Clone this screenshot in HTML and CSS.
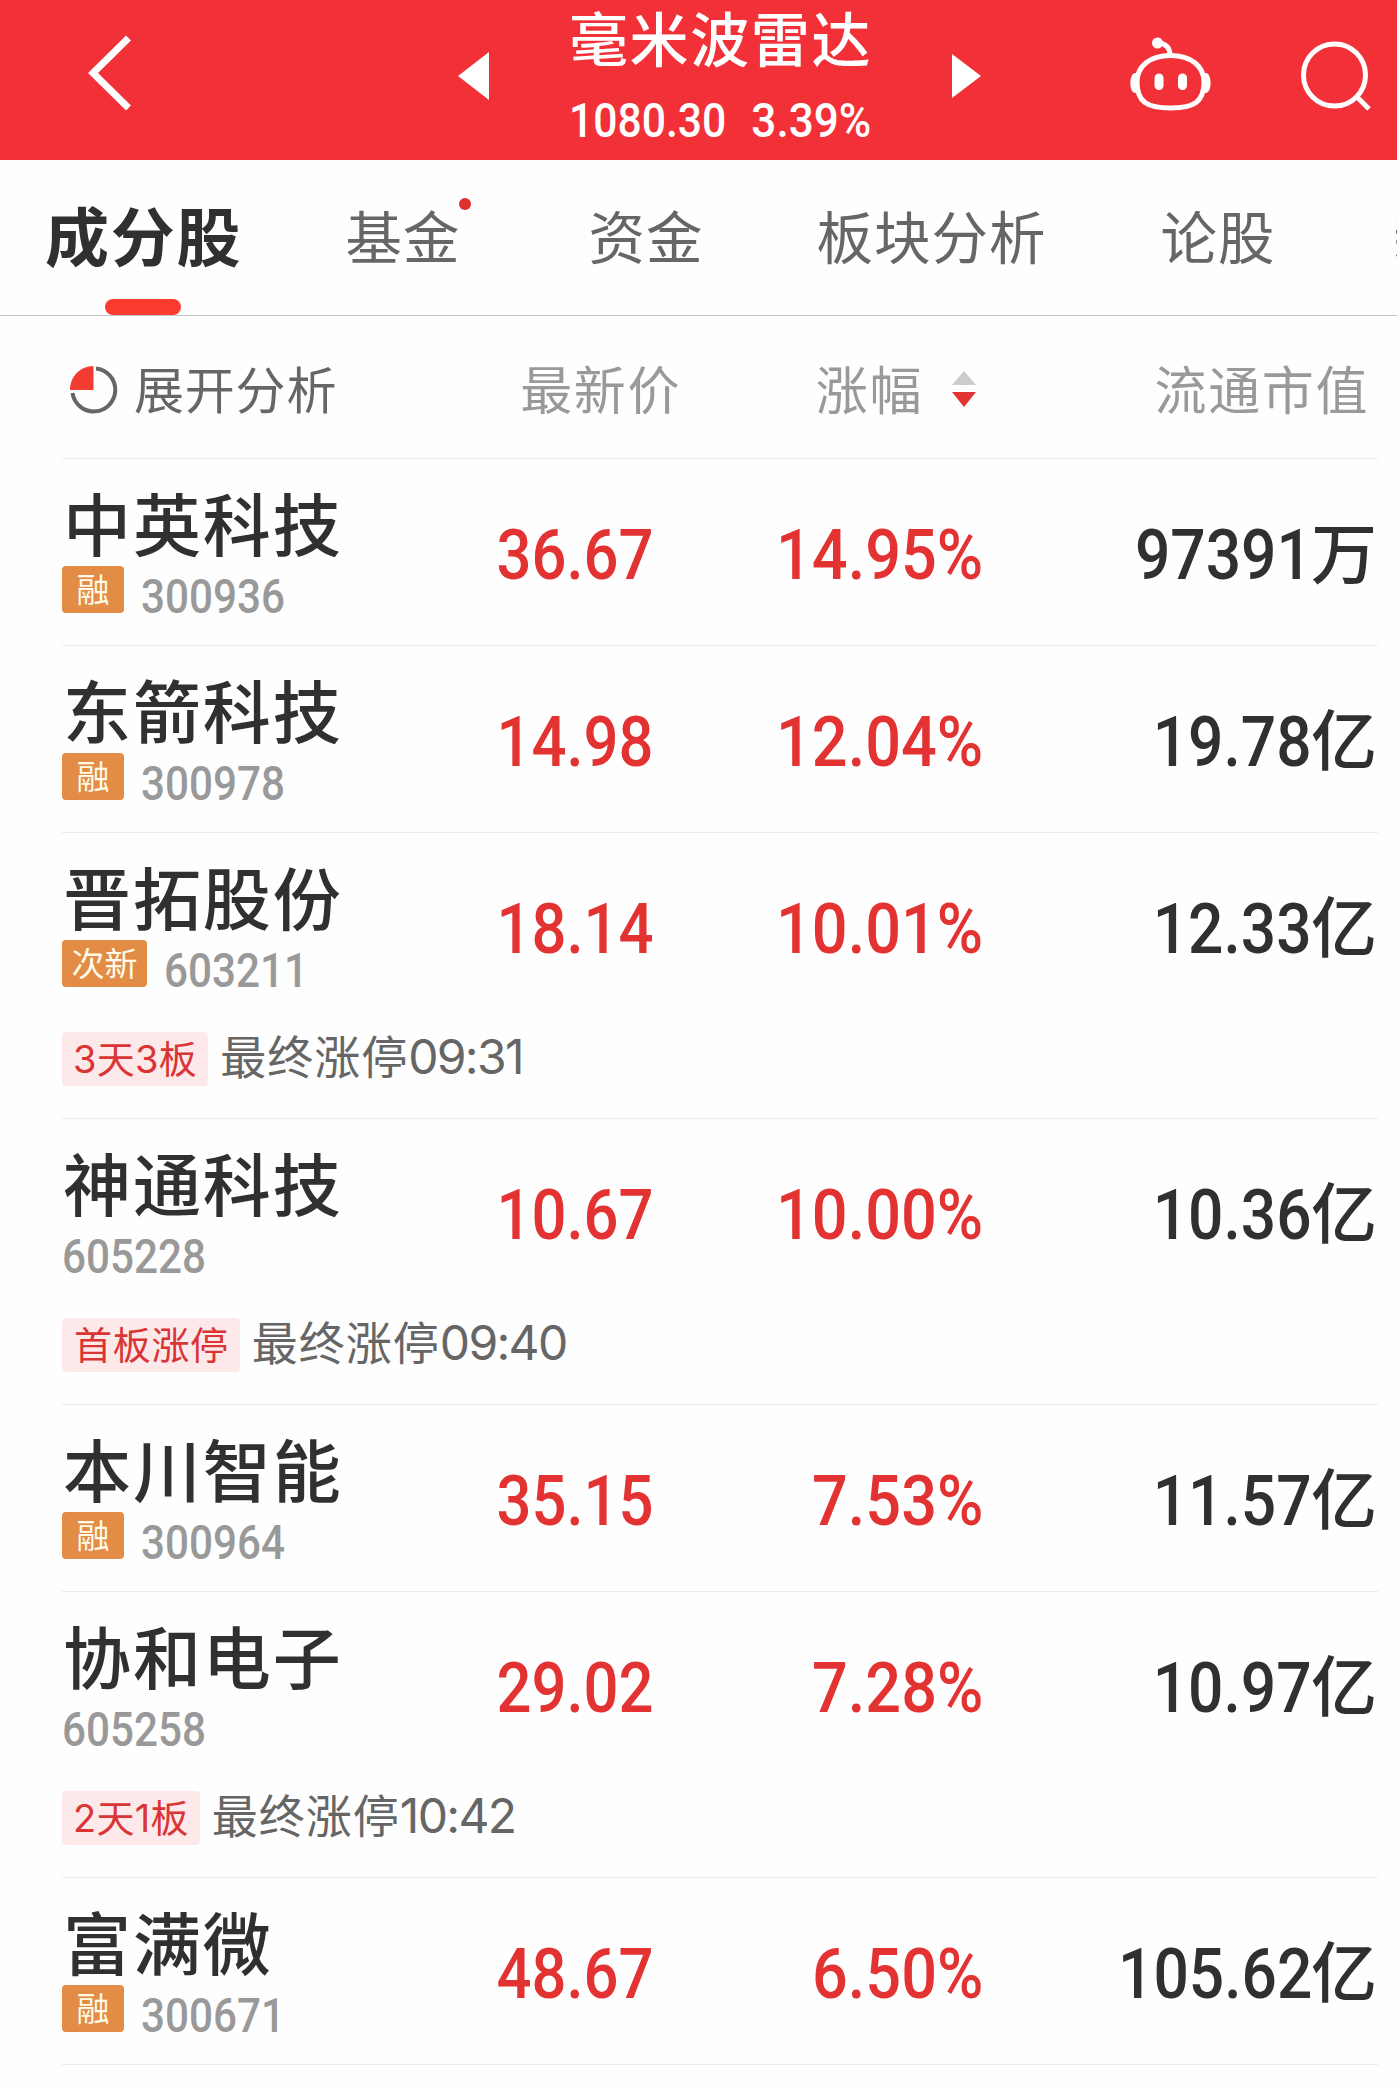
FILE: index.html
```html
<!DOCTYPE html>
<html lang="zh-CN">
<head>
  <title>毫米波雷达</title>
  <meta charset="UTF-8">
  <meta name="viewport" content="width=device-width, initial-scale=1.0">
  <link rel="stylesheet" href="styles.css">
</head>
<body>
  <header class="header">
    <svg class="back" width="46" height="80" viewBox="0 0 46 80">
      <path d="M41.500 5 L6 40 L41.500 75" fill="none" stroke="#fff" stroke-width="7"/>
    </svg>
    <svg class="prev" width="31" height="48" viewBox="0 0 31 48">
      <path d="M31 0 V48 L0 24 Z" fill="#fff"/>
    </svg>
    <div class="title">
      <h1>毫米波雷达</h1>
      <p><span class="num">1080.30</span><span class="num">3.39%</span></p>
    </div>
    <svg class="next" width="29" height="44" viewBox="0 0 29 44">
      <path d="M0 0 V44 L29 22 Z" fill="#fff"/>
    </svg>
    <svg class="robot" width="86" height="78" viewBox="0 0 86 78">
      <g fill="none" stroke="#fff" stroke-width="5">
        <path d="M42.500 19.500 C63 19.500 76 30 76 46 C76 66 66 72 42.500 72 C19 72 9 66 9 46 C9 30 22 19.500 42.500 19.500 Z"/>
        <path d="M42 19 C42 12 38 7.500 30 7"/>
      </g>
      <circle cx="29.500" cy="7" r="5.500" fill="#fff"/>
      <path d="M8 37 C0.500 36 0.500 58 8 57 Z M77 37 C84.500 36 84.500 58 77 57 Z" fill="#fff"/>
      <rect x="26.500" y="37.500" width="9" height="16.500" rx="4.500" fill="#fff"/>
      <rect x="50" y="37.500" width="9" height="16.500" rx="4.500" fill="#fff"/>
    </svg>
    <svg class="search" width="74" height="74" viewBox="0 0 74 74">
      <circle cx="36.500" cy="35" r="31" fill="none" stroke="#fff" stroke-width="5"/>
      <path d="M58 56 L71 69" stroke="#fff" stroke-width="5"/>
    </svg>
  </header>

  <nav class="tabs">
    <a class="tab active">成分股</a>
    <a class="tab tab-fund">基金<i class="dot"></i></a>
    <a class="tab tab-money">资金</a>
    <a class="tab tab-sector">板块分析</a>
    <a class="tab tab-talk">论股</a>
    <a class="tab tab-more">新</a>
  </nav>

  <main class="list">
    <div class="row head">
      <div class="expand">
        <svg width="48" height="48" viewBox="0 0 48 48">
          <path d="M26 2.500 A21.500 21.500 0 1 1 2.500 27" fill="none" stroke="#666" stroke-width="4"/>
          <path d="M23.500 24 H0 A23.500 23.500 0 0 1 23.500 0 Z" fill="#f23c32"/>
        </svg>
        <span>展开分析</span>
      </div>
      <div class="col-price">最新价</div>
      <div class="col-rate">涨幅
        <svg width="24" height="36" viewBox="0 0 24 36">
          <path d="M12 0 L24 14 H0 Z" fill="#ccc"/>
          <path d="M12 36 L24 21 H0 Z" fill="#e33232"/>
        </svg>
      </div>
      <div class="col-value">流通市值</div>
    </div>

    <div class="row">
      <div class="stock">
        <h2>中英科技</h2>
        <div class="meta"><span class="badge">融</span><span class="num code">300936</span></div>
      </div>
      <div class="col-price"><span class="num">36.67</span></div>
      <div class="col-rate"><span class="num">14.95%</span></div>
      <div class="col-value"><span class="num">97391</span><span class="unit">万</span></div>
    </div>

    <div class="row">
      <div class="stock">
        <h2>东箭科技</h2>
        <div class="meta"><span class="badge">融</span><span class="num code">300978</span></div>
      </div>
      <div class="col-price"><span class="num">14.98</span></div>
      <div class="col-rate"><span class="num">12.04%</span></div>
      <div class="col-value"><span class="num">19.78</span><span class="unit">亿</span></div>
    </div>

    <div class="row tall">
      <div class="stock">
        <h2>晋拓股份</h2>
        <div class="meta"><span class="badge wide">次新</span><span class="num code">603211</span></div>
      </div>
      <div class="col-price"><span class="num">18.14</span></div>
      <div class="col-rate"><span class="num">10.01%</span></div>
      <div class="col-value"><span class="num">12.33</span><span class="unit">亿</span></div>
      <div class="limit"><span class="tag">3天3板</span><span>最终涨停<b>09:31</b></span></div>
    </div>

    <div class="row tall">
      <div class="stock">
        <h2>神通科技</h2>
        <div class="meta"><span class="num code">605228</span></div>
      </div>
      <div class="col-price"><span class="num">10.67</span></div>
      <div class="col-rate"><span class="num">10.00%</span></div>
      <div class="col-value"><span class="num">10.36</span><span class="unit">亿</span></div>
      <div class="limit"><span class="tag tag-first">首板涨停</span><span>最终涨停<b>09:40</b></span></div>
    </div>

    <div class="row">
      <div class="stock">
        <h2>本川智能</h2>
        <div class="meta"><span class="badge">融</span><span class="num code">300964</span></div>
      </div>
      <div class="col-price"><span class="num">35.15</span></div>
      <div class="col-rate"><span class="num">7.53%</span></div>
      <div class="col-value"><span class="num">11.57</span><span class="unit">亿</span></div>
    </div>

    <div class="row tall">
      <div class="stock">
        <h2>协和电子</h2>
        <div class="meta"><span class="num code">605258</span></div>
      </div>
      <div class="col-price"><span class="num">29.02</span></div>
      <div class="col-rate"><span class="num">7.28%</span></div>
      <div class="col-value"><span class="num">10.97</span><span class="unit">亿</span></div>
      <div class="limit"><span class="tag">2天1板</span><span>最终涨停<b>10:42</b></span></div>
    </div>

    <div class="row">
      <div class="stock">
        <h2>富满微</h2>
        <div class="meta"><span class="badge">融</span><span class="num code">300671</span></div>
      </div>
      <div class="col-price"><span class="num">48.67</span></div>
      <div class="col-rate"><span class="num">6.50%</span></div>
      <div class="col-value"><span class="num">105.62</span><span class="unit">亿</span></div>
    </div>
  </main>
</body>
</html>
```
FILE: styles.css
```css
/* Reset styles */
* {
  margin: 0;
  padding: 0;
  box-sizing: border-box;
}

/* Base styles */
body {
  font-family: Roboto, 'Noto Sans CJK SC', sans-serif;
  background-color: #fefefe;
  color: #303030;
  width: 1397px;
  height: 2090px;
  overflow: hidden;
}

h1, h2 {
  font-weight: 500;
}

svg {
  display: block;
  flex: none;
}

/* narrow digits */
.num {
  display: inline-block;
  font-family: Roboto, sans-serif;
  font-weight: 500;
  transform: scaleX(0.9);
  transform-origin: right center;
}

/* Header */
.header {
  display: flex;
  align-items: flex-start;
  height: 160px;
  background-color: #f23038;
  color: #fff;
}

.back {
  margin: 33px 0 0 87px;
}

.prev {
  margin: 52px 0 0 325px;
}

.title {
  width: 304px;
  margin-left: 80px;
}

.title h1 {
  margin-top: 10px;
  font-size: 59px;
  line-height: 64px;
  letter-spacing: 1.6px;
  white-space: nowrap;
}

.title p {
  display: flex;
  justify-content: space-between;
  width: 302px;
  margin-top: 19px;
  font-size: 49px;
  line-height: 56px;
}

.title .num {
  transform: scaleX(0.87);
}

.title .num:first-child {
  transform-origin: left center;
}

.title .num:last-child {
  margin-left: -20px;
  transform: scaleX(0.9);
}

.next {
  margin: 54px 0 0 79px;
}

.robot {
  margin: 36px 0 0 147px;
}

.search {
  margin: 40px 0 0 84px;
}

/* Tabs */
.tabs {
  display: flex;
  height: 156px;
  border-bottom: 1px solid #c8c8c8;
  overflow: hidden;
}

.tab {
  position: relative;
  flex: none;
  font-size: 56.5px;
  line-height: 160px;
  letter-spacing: 1px;
  color: #666;
  white-space: nowrap;
}

.active {
  height: 155px;
  margin-left: 45px;
  font-size: 64px;
  font-weight: 700;
  letter-spacing: 1.8px;
  color: #303030;
}

.active::after {
  content: '';
  position: absolute;
  left: 60px;
  bottom: 0;
  width: 76px;
  height: 16px;
  border-radius: 8px;
  background-color: #fb3b30;
}

.tab-fund {
  margin-left: 103px;
}

.tab-money {
  margin-left: 128px;
}

.tab-sector {
  margin-left: 113px;
}

.tab-talk {
  margin-left: 114px;
}

.tab-more {
  margin-left: 118px;
}

.dot {
  position: absolute;
  top: 38px;
  right: -11px;
  width: 12px;
  height: 12px;
  border-radius: 50%;
  background-color: #e03030;
}

/* Stock list */
.list {
  margin: 0 19px 0 62px;
}

.row {
  display: grid;
  grid-template-columns: 300px 292px 329px 394px;
  grid-template-rows: 186px;
  height: 187px;
  border-bottom: 1px solid #ececec;
}

.tall {
  grid-template-rows: 186px 99px;
  height: 286px;
}

.col-price, .col-rate, .col-value {
  display: flex;
  align-items: center;
  justify-content: flex-end;
  padding-top: 6px;
  font-size: 70px;
  white-space: nowrap;
}

.col-price, .col-rate {
  color: #e33232;
}

.col-price .num {
  transform: scaleX(0.88);
}

.col-value .num {
  transform: scaleX(0.89);
}

.unit {
  margin-bottom: 13px;
  margin-left: -1px;
  font-size: 66px;
  font-weight: 500;
}

.stock h2 {
  margin-top: 31px;
  padding-left: 1px;
  font-size: 68px;
  line-height: 76px;
  letter-spacing: 1.9px;
  white-space: nowrap;
}

.meta {
  display: flex;
  align-items: flex-start;
}

.badge {
  width: 62px;
  height: 47px;
  margin-right: 17px;
  border-radius: 4px;
  background-color: #e28c46;
  color: #fffbe8;
  font-size: 33px;
  line-height: 49px;
  text-align: center;
}

.wide {
  width: 85px;
}

.code {
  margin-top: 3px;
  font-size: 48px;
  line-height: 56px;
  color: #999;
  transform: scaleX(0.88);
  transform-origin: left center;
}

.limit {
  display: flex;
  grid-column: 1 / 5;
  height: 54px;
  margin-top: 13px;
  color: #666;
  font-size: 46px;
  line-height: 49px;
  letter-spacing: 1px;
}

.limit b {
  font-family: Inter, sans-serif;
  font-size: 48px;
  font-weight: 400;
  letter-spacing: -1.7px;
}

.tag {
  height: 54px;
  margin-right: 12px;
  padding: 0 11px;
  border-radius: 4px;
  background-color: #fde9e9;
  color: #d93535;
  font-family: Inter, 'Noto Sans CJK SC', sans-serif;
  font-size: 38px;
  line-height: 54px;
  letter-spacing: 0.3px;
}

.tag-first {
  padding: 0 11px 0 12px;
  letter-spacing: 0.7px;
}

/* Column titles */
.head {
  grid-template-rows: 142px;
  height: 143px;
}

.head .col-price, .head .col-rate, .head .col-value {
  padding-top: 0;
  font-size: 52px;
  font-weight: 400;
  letter-spacing: 1.6px;
  color: #999;
}

.head .col-price {
  position: relative;
  left: 27px;
}

.head .col-rate svg {
  margin-top: 4px;
  margin-left: 29px;
  margin-right: 7px;
}

.head .col-value {
  padding-right: 8px;
}

.expand {
  display: flex;
  align-items: center;
  gap: 16px;
  padding-left: 8px;
  color: #666;
  font-size: 50px;
  letter-spacing: 0.8px;
  white-space: nowrap;
}

.expand svg {
  margin-top: 5px;
}
```
